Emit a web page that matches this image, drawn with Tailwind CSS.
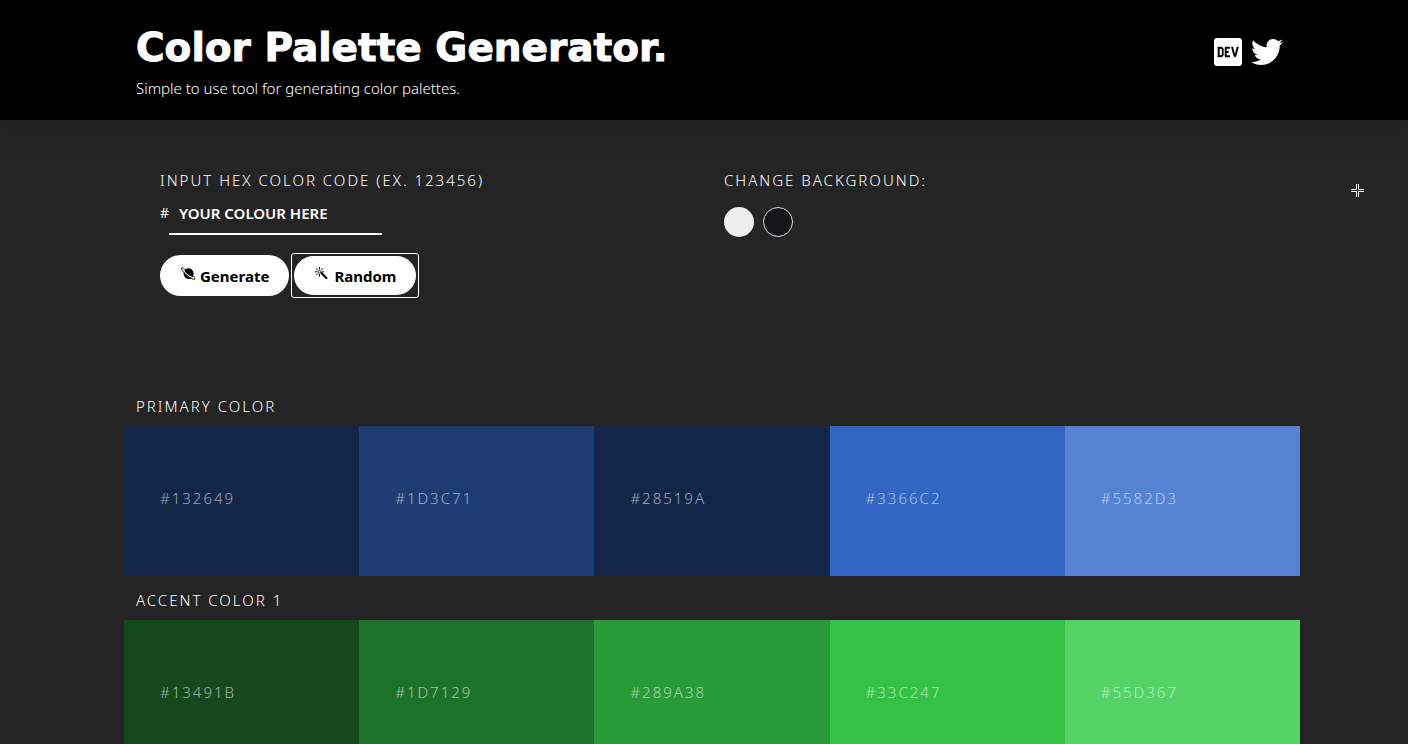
<!DOCTYPE html>
<html lang="en">
<head>
<meta charset="utf-8">
<meta name="viewport" content="width=device-width, initial-scale=1">
<title>Color Palette Generator</title>
<script src="https://cdn.jsdelivr.net/npm/@tailwindcss/browser@4"></script>
</head>
<body class="h-screen overflow-hidden bg-[#242424] font-['Noto_Sans','Open_Sans',sans-serif] font-light text-white">
<header class="bg-black pl-4 shadow-[0_0_40px_rgba(0,0,0,0.2)]">
  <div class="mx-auto flex h-[120px] max-w-[1176px] justify-between px-3">
    <div class="pt-6">
      <h1 class="font-['DejaVu_Sans',sans-serif] text-[39px] leading-12 font-bold whitespace-nowrap [-webkit-text-stroke:1px_white]">Color Palette Generator.</h1>
      <p class="pt-1 text-[15px] leading-6">Simple to use tool for generating color palettes.</p>
    </div>
    <nav class="flex gap-[7px] pt-9 pr-[5px]" aria-label="Social links">
      <a href="#dev" aria-label="DEV">
        <svg class="size-8" viewBox="0 0 448 512" fill="white"><path d="M120.12 208.29c-3.88-2.9-7.77-4.35-11.65-4.35H91.03v104.47h17.45c3.88 0 7.77-1.45 11.65-4.35 3.88-2.9 5.82-7.25 5.82-13.06v-69.65c-.01-5.8-1.96-10.16-5.83-13.06zM404.1 32H43.9C19.7 32 .06 51.59 0 75.8v360.4C.06 460.41 19.7 480 43.9 480h360.2c24.21 0 43.84-19.59 43.9-43.8V75.8c-.06-24.21-19.7-43.8-43.9-43.8zM154.2 291.19c0 18.81-11.61 47.31-48.36 47.25h-46.4V172.98h47.38c35.44 0 47.36 28.46 47.37 47.28l.01 70.93zm100.68-88.66H201.6v38.42h32.57v29.57H201.6v38.41h53.29v29.57h-62.18c-11.16.29-20.44-8.53-20.72-19.69V193.7c-.27-11.15 8.56-20.41 19.71-20.69h63.19l-.01 29.52zm103.64 115.29c-13.2 30.75-36.85 24.63-47.44 0l-38.53-144.8h32.57l29.71 113.72 29.57-113.72h32.58l-38.46 144.8z"/></svg>
      </a>
      <a href="#twitter" aria-label="Twitter">
        <svg class="size-8" viewBox="0 0 512 512" fill="white"><path d="M459.37 151.716c.325 4.548.325 9.097.325 13.645 0 138.72-105.583 298.558-298.558 298.558-59.452 0-114.68-17.219-161.137-47.106 8.447.974 16.568 1.299 25.34 1.299 49.055 0 94.213-16.568 130.274-44.832-46.132-.975-84.792-31.188-98.112-72.772 6.498.974 12.995 1.624 19.818 1.624 9.421 0 18.843-1.3 27.614-3.573-48.081-9.747-84.143-51.98-84.143-102.985v-1.299c13.969 7.797 30.214 12.67 47.431 13.319-28.264-18.843-46.781-51.005-46.781-87.391 0-19.492 5.197-37.36 14.294-52.954 51.655 63.675 129.3 105.258 216.365 109.807-1.624-7.797-2.599-15.918-2.599-24.04 0-57.828 46.782-104.934 104.934-104.934 30.213 0 57.502 12.67 76.67 33.137 23.715-4.548 46.456-13.32 66.599-25.34-7.798 24.366-24.366 44.833-46.132 57.827 21.117-2.273 41.584-8.122 60.426-16.243-14.292 20.791-32.161 39.308-52.628 54.253z"/></svg>
      </a>
    </nav>
  </div>
</header>
<main class="pl-4">
  <div class="mx-auto max-w-[1176px]">
    <section class="grid h-[272px] grid-cols-2 pt-12 pr-3 pl-9">
      <form>
        <label for="hex" class="block text-[15px] leading-6 tracking-[2px]">INPUT HEX COLOR CODE (EX. 123456)</label>
        <div class="mt-1 flex pt-1">
          <span class="w-[9px] pt-px text-[14px] leading-6 font-normal">#</span>
          <input id="hex" placeholder="YOUR COLOUR HERE" class="h-[35px] w-[213px] border-b-2 border-white bg-transparent px-[10px] pt-px pb-2 text-[15px] leading-6 font-semibold outline-none placeholder:text-white">
        </div>
        <div class="mt-5 flex items-center gap-[5px]">
          <button type="button" class="flex h-[41px] items-center rounded-full bg-white px-5 pt-px text-[15px] font-bold text-black">
            <svg class="mr-1 mb-1 size-4" viewBox="0 0 16 16"><path d="M4.300 4.200C6 2 10 1.500 12.300 4C14 6 14 9 12.800 11C9 9.800 6.300 7.800 4.300 4.200Z"/><path d="M3.800 5.800C5.800 9.300 8.500 11.200 12 12C9 14 5 12.500 4 9.500C3.500 8 3.500 7 3.800 5.800Z"/><path d="M4.500 2.800C1.500 1.200 .500 1.500 2 4C4 7.500 9 11.800 13 13.200C15.500 14 15.200 12.300 13.500 10.300" fill="none" stroke="black" stroke-width=".9"/></svg>
            Generate
          </button>
          <button type="button" class="relative flex h-[39px] items-center rounded-full bg-white px-5 pt-px text-[15px] font-bold text-black after:absolute after:-inset-[3px] after:rounded-[3px] after:border after:border-white">
            <svg class="mr-1 mb-1 size-4" viewBox="0 0 16 16" fill="none" stroke="black"><path d="M7 6.500L13 12.800" stroke-width="2"/><path d="M5.500 1v2.500M5.500 8v2.500M1 5.800h2.500M7.800 5.800h2M2.200 2.500l1.700 1.700M7.200 4.200L9 2.300M2.300 9l1.700-1.700" stroke-width="1"/><circle cx="5.500" cy="5.800" r="1.300" stroke-width=".7"/></svg>
            Random
          </button>
        </div>
      </form>
      <div>
        <h2 class="text-[15px] leading-6 tracking-[2px]">CHANGE BACKGROUND:</h2>
        <div class="mt-[15px] flex gap-[9px]">
          <button type="button" aria-label="Light background" class="size-[30px] rounded-full bg-[#eee]"></button>
          <button type="button" aria-label="Dark background" class="size-[30px] rounded-full border border-[#ddd] bg-[#15151a]"></button>
        </div>
      </div>
    </section>
    <section>
      <h2 class="px-3 pt-[2px] pb-2 text-[15px] leading-6 tracking-[2px]">PRIMARY COLOR</h2>
      <div class="grid h-[150px] grid-cols-5 text-[15px] tracking-[2px] text-white/60">
        <div class="flex items-center bg-[#132649] pb-1.5 pl-9">#132649</div>
        <div class="flex items-center bg-[#1d3c71] pb-1.5 pl-9">#1D3C71</div>
        <div class="flex items-center bg-[#132649] pb-1.5 pl-9">#28519A</div>
        <div class="flex items-center bg-[#3366c2] pb-1.5 pl-9">#3366C2</div>
        <div class="flex items-center bg-[#5582d3] pb-1.5 pl-9">#5582D3</div>
      </div>
    </section>
    <section>
      <h2 class="px-3 pt-3 pb-2 text-[15px] leading-6 tracking-[2px]">ACCENT COLOR 1</h2>
      <div class="grid h-[150px] grid-cols-5 text-[15px] tracking-[2px] text-white/60">
        <div class="flex items-center bg-[#13491b] pb-1.5 pl-9">#13491B</div>
        <div class="flex items-center bg-[#1d7129] pb-1.5 pl-9">#1D7129</div>
        <div class="flex items-center bg-[#289a38] pb-1.5 pl-9">#289A38</div>
        <div class="flex items-center bg-[#33c247] pb-1.5 pl-9">#33C247</div>
        <div class="flex items-center bg-[#55d367] pb-1.5 pl-9">#55D367</div>
      </div>
    </section>
  </div>
</main>
<svg class="pointer-events-none absolute top-[184px] right-[44px] size-[13px]" viewBox="0 0 13 13" fill="none" stroke="white" aria-hidden="true"><path d="M5.500 0v5.500H0M7.500 0v5.500H13M5.500 13V7.500H0M7.500 13V7.500H13"/></svg>
</body>
</html>
